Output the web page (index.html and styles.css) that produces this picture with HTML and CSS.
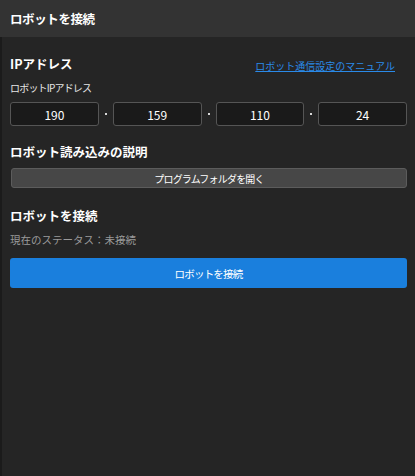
FILE: index.html
```html
<!DOCTYPE html>
<html lang="ja">
  <head>
    <meta charset="UTF-8" />
    <title>ロボットを接続</title>
    <link rel="stylesheet" href="styles.css">
  </head>
  <body>
    <div class="panel-header">ロボットを接続</div>

    <div class="panel-body">
      <!-- IPアドレス -->
      <div class="section-title-row">
        <h2>IPアドレス</h2>
        <a href="#" class="manual-link">ロボット通信設定のマニュアル</a>
      </div>
      <div class="field-label">ロボットIPアドレス</div>
      <div class="ip-row">
        <input type="text" class="ip-box" value="190" />
        <span class="ip-dot"></span>
        <input type="text" class="ip-box" value="159" />
        <span class="ip-dot"></span>
        <input type="text" class="ip-box" value="110" />
        <span class="ip-dot"></span>
        <input type="text" class="ip-box" value="24" />
      </div>

      <!-- 読み込み -->
      <h2 class="section-gap">ロボット読み込みの説明</h2>
      <button class="btn-gray">プログラムフォルダを開く</button>

      <!-- 接続 -->
      <h2 class="section-gap-lg">ロボットを接続</h2>
      <div class="status">現在のステータス：未接続</div>
      <button class="btn-blue">ロボットを接続</button>
    </div>
  </body>
</html>
```

FILE: styles.css
```css
/* 全体 */
html,
body {
  height: 100%;
}

body {
  margin: 0;
  background-color: #252525;
  color: #f0f0f0;
  font-family: "Noto Sans CJK JP", "Noto Sans", sans-serif;
  display: flex;
  flex-direction: column;
}

/* ヘッダー */
.panel-header {
  height: 37px;
  line-height: 37px;
  padding-left: 10px;
  background-color: #333333;
  font-size: 12.5px;
  font-weight: 700;
  letter-spacing: -0.4px;
  color: #ffffff;
}

.panel-body {
  flex: 1;
  border-left: 2px solid #1b1b1b;
  padding: 18px 8px 0 8px;
  display: flex;
  flex-direction: column;
}

h2 {
  margin: 0;
  font-size: 12.5px;
  line-height: 18px;
  font-weight: 700;
  color: #ffffff;
}

.section-title-row {
  display: flex;
  justify-content: space-between;
  align-items: center;
}

.manual-link {
  font-size: 10px;
  color: #2a8ae8;
  text-decoration: underline;
  margin-right: 12px;
  margin-top: 2px;
}

.field-label {
  margin-top: 7px;
  font-size: 10px;
  line-height: 16px;
  letter-spacing: -0.8px;
  color: #e6e6e6;
}

/* IP入力 */
.ip-row {
  display: flex;
  align-items: center;
  margin-top: 6px;
}

.ip-box {
  flex: 1;
  min-width: 0;
  height: 24px;
  box-sizing: border-box;
  background-color: #1a1a1a;
  border: 1px solid #555555;
  border-radius: 3px;
  color: #ffffff;
  text-align: center;
  font-family: inherit;
  font-size: 12px;
  padding: 0;
}

.ip-dot {
  width: 14px;
  display: flex;
  justify-content: center;
}

.ip-dot::before {
  content: "";
  width: 2px;
  height: 2px;
  background-color: #d8d8d8;
}

.section-gap {
  margin-top: 17px;
}

.section-gap-lg {
  margin-top: 19px;
}

/* ボタン */
.btn-gray {
  margin-top: 7px;
  margin-left: 1px;
  height: 20px;
  background-color: #474747;
  border: 1px solid #5c5c5c;
  border-radius: 3px;
  color: #ffffff;
  font-family: inherit;
  font-size: 10px;
  letter-spacing: -0.8px;
  padding: 0;
}

.status {
  margin-top: 7px;
  font-size: 10.5px;
  line-height: 16px;
  color: #9a9a9a;
}

.btn-blue {
  margin-top: 10px;
  height: 30px;
  background-color: #1a7fdd;
  border: none;
  border-radius: 3px;
  color: #ffffff;
  font-family: inherit;
  font-size: 10.5px;
  letter-spacing: -0.8px;
  padding: 0;
}
```
